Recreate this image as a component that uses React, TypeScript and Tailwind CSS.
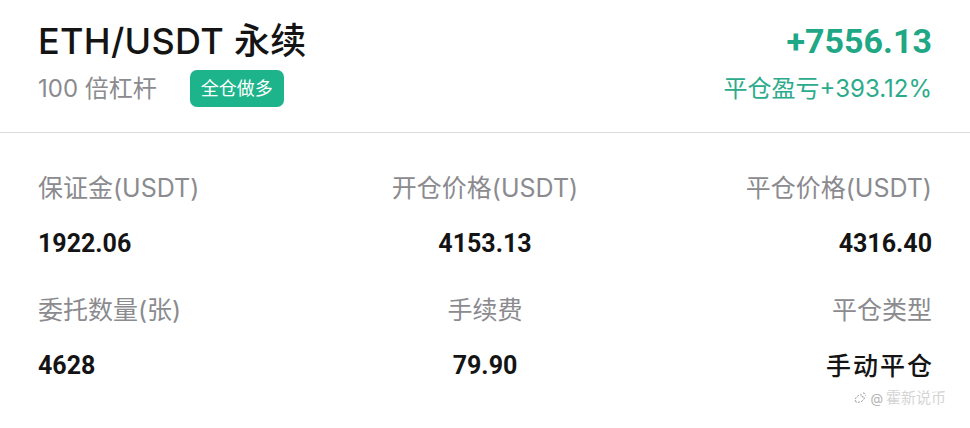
import React from "react";

const sans = { fontFamily: 'Inter, "Noto Sans CJK SC", sans-serif' };
const num = { fontFamily: 'Roboto, "Noto Sans CJK SC", sans-serif' };

function Cell({ label, value, align, cjkValue }: { label: string; value: string; align: "left" | "center" | "right"; cjkValue?: boolean }) {
  const a = align === "left" ? "items-start" : align === "center" ? "items-center" : "items-end";
  return (
    <div className={`flex flex-col ${a}`}>
      <div className="h-[32px] leading-[32px] text-[25px] text-[#8b8b8f]" style={sans}>{label}</div>
      <div
        className={`mt-[24px] h-[32px] leading-[32px] text-[#141414] ${cjkValue ? "text-[25px] font-medium tracking-[2px] mr-[-2px]" : "text-[25px] font-bold"}`}
        style={cjkValue ? sans : num}
      >
        {value}
      </div>
    </div>
  );
}

export default function App() {
  return (
    <div className="w-[970px] h-[428px] bg-white relative overflow-hidden" style={sans}>
      <div className="h-[132px] px-[38px] flex justify-between">
        <div className="flex flex-col">
          <div className="mt-[21px] h-[40px] leading-[40px] text-[36px] font-medium text-[#141414] tracking-[0.3px]">ETH/USDT 永续</div>
          <div className="mt-[9px] h-[37px] flex items-center gap-[33px]">
            <span className="text-[24px] text-[#8b8b8f]">100 倍杠杆</span>
            <span className="h-[37px] px-[11px] rounded-[7px] bg-[#1db48c] text-white text-[18px] flex items-center">全仓做多</span>
          </div>
        </div>
        <div className="flex flex-col items-end">
          <div className="mt-[21px] h-[40px] leading-[40px] text-[34px] font-bold text-[#1fa786]" style={num}>+7556.13</div>
          <div className="mt-[9px] h-[37px] leading-[37px] text-[24px] text-[#2bab8c]">平仓盈亏+393.12%</div>
        </div>
      </div>
      <div className="h-px bg-[#dcdcdc]" />
      <div className="px-[38px] pt-[39px] grid grid-cols-3 gap-y-[34px]">
        <Cell label="保证金(USDT)" value="1922.06" align="left" />
        <Cell label="开仓价格(USDT)" value="4153.13" align="center" />
        <Cell label="平仓价格(USDT)" value="4316.40" align="right" />
        <Cell label="委托数量(张)" value="4628" align="left" />
        <Cell label="手续费" value="79.90" align="center" />
        <Cell label="平仓类型" value="手动平仓" align="right" cjkValue />
      </div>
      <div className="absolute right-[24px] top-[387px] flex items-center gap-[3px] text-[15px] text-[#d5d5d5]">
        <svg width="14" height="14" viewBox="0 0 14 14" fill="none" stroke="#9a9a9a" strokeWidth="1" strokeDasharray="2 1.2">
          <path d="M3 11c-2-2 0-6 4-7 2-.5 3 .5 2 2 2-.5 3 .5 2 2-1 2-4 4-8 3z" />
          <path d="M10 2c1.5 0 2.5 1 2.5 2.5" />
        </svg>
        <span className="text-[#b5b5b5] text-[13px]">@</span>
        <span>霍新说币</span>
      </div>
    </div>
  );
}
